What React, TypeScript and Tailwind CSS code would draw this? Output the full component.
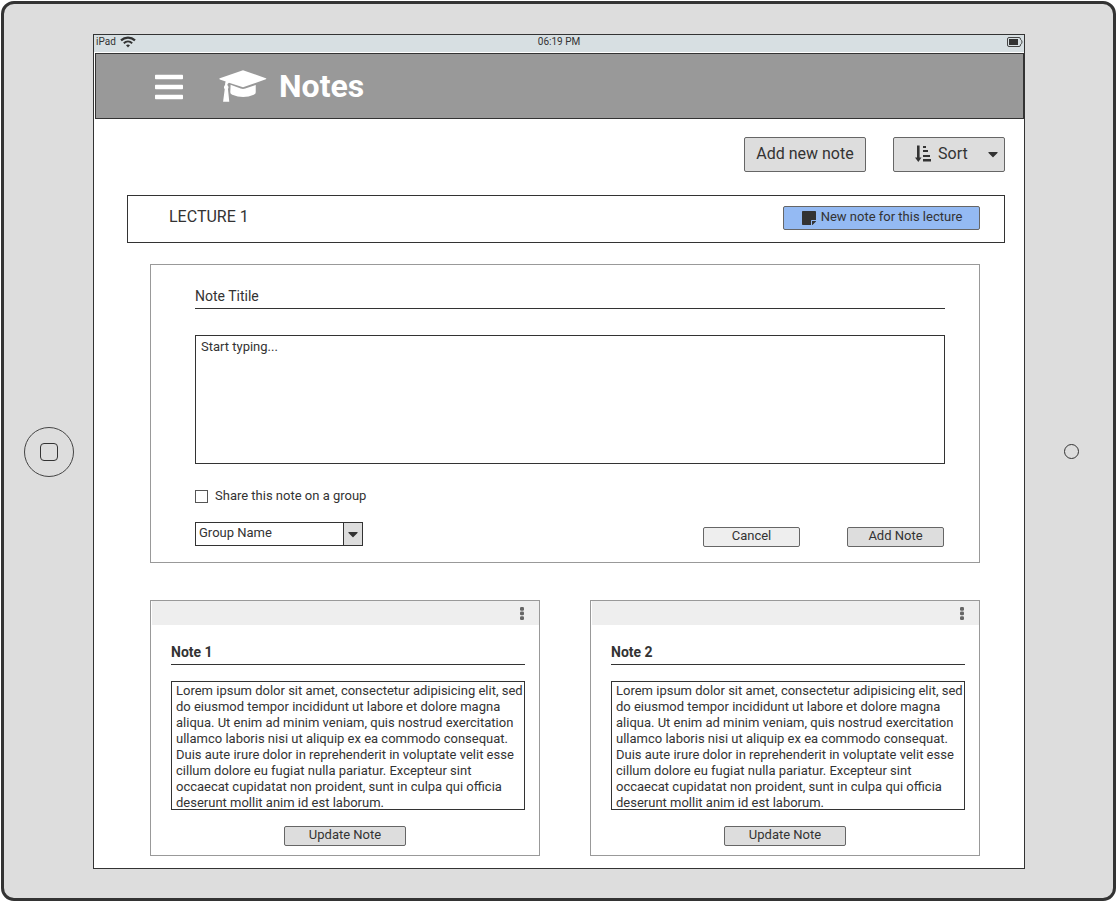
import { useState } from "react";
import { FaBars, FaCaretDown, FaStickyNote } from "react-icons/fa";

const lorem =
  "Lorem ipsum dolor sit amet, consectetur adipisicing elit, sed do eiusmod tempor incididunt ut labore et dolore magna aliqua. Ut enim ad minim veniam, quis nostrud exercitation ullamco laboris nisi ut aliquip ex ea commodo consequat. Duis aute irure dolor in reprehenderit in voluptate velit esse cillum dolore eu fugiat nulla pariatur. Excepteur sint occaecat cupidatat non proident, sunt in culpa qui officia deserunt mollit anim id est laborum.";

function WifiIcon() {
  return (
    <svg viewBox="0 0 16 12" className="h-3 w-4" fill="none" stroke="#333" aria-hidden="true">
      <path d="M1 4.4C5 0.6 11 0.6 15 4.4" strokeWidth="2.2" />
      <path d="M3.8 7.2C6.2 5 9.8 5 12.2 7.2" strokeWidth="1.9" />
      <path d="M6 9.2Q8 7.8 10 9.2L8 11.6Z" fill="#333" stroke="none" />
    </svg>
  );
}

function BatteryIcon() {
  return (
    <svg viewBox="0 0 16 10" className="h-[10px] w-4" aria-hidden="true">
      <path
        d="M2 0.5H12Q13.5 0.5 13.5 2V2.5Q15 3 15 5T13.5 7.5V8Q13.5 9.5 12 9.5H2Q0.5 9.5 0.5 8V2Q0.5 0.5 2 0.5Z"
        fill="#d7dfe2"
        stroke="#444"
      />
      <rect x="2" y="2" width="9" height="6" fill="#333" />
    </svg>
  );
}

function CapIcon() {
  return (
    <svg viewBox="0 0 146 98" className="ml-9 h-8 w-12" fill="currentColor" aria-hidden="true">
      <path d="M73 1L143 25Q146 27 143 28L73 53L30 39Q25 41 25 46Q31 52 27 58L31 97H12L17 59Q12 52 18 46Q18 39 20 35L2 29Q-1 27 2 25Z" />
      <path d="M35 45L66 57Q73 60 80 57L112 46V68Q112 73 106 76Q74 90 40 76Q34 73 34 68Z" />
    </svg>
  );
}

function SortIcon() {
  return (
    <svg viewBox="0 0 17 17" className="mr-1.5 size-[17px]" fill="currentColor" aria-hidden="true">
      <path d="M2 0.5H4.6V12.5H6.6L3.3 17L0 12.5H2Z" />
      <rect x="8" y="1" width="3" height="2" />
      <rect x="8" y="5" width="5" height="2" />
      <rect x="8" y="10" width="7" height="2" />
      <rect x="8" y="14" width="8" height="2.5" />
    </svg>
  );
}

function DotsIcon() {
  return (
    <svg viewBox="0 0 4 13" className="h-[13px] w-1" fill="currentColor" aria-hidden="true">
      <rect width="4" height="3.7" rx="1.2" />
      <rect y="4.6" width="4" height="3.7" rx="1.2" />
      <rect y="9.2" width="4" height="3.7" rx="1.2" />
    </svg>
  );
}

function StatusBar() {
  return (
    <div className="grid h-[17px] grid-cols-3 items-center bg-[#d7dfe2] pb-[3px] text-[10px] leading-3">
      <div className="flex items-center gap-1 pl-0.5">
        <span>iPad</span>
        <WifiIcon />
      </div>
      <span className="text-center">06:19 PM</span>
      <div className="flex justify-end pr-px">
        <BatteryIcon />
      </div>
    </div>
  );
}

function Header() {
  return (
    <header className="mt-px ml-px flex h-[66px] items-center border border-[#333] bg-[#999] pl-[59px] text-white">
      <button type="button" aria-label="Menu" className="pt-[2px]">
        <FaBars className="h-8 w-7" />
      </button>
      <CapIcon />
      <h1 className="ml-3 text-[32px] leading-9 font-bold">Notes</h1>
    </header>
  );
}

function NoteForm() {
  const [shared, setShared] = useState(false);
  return (
    <form
      className="mt-[21px] mr-[25px] ml-[23px] border border-[#999] pt-[19px] pr-[34px] pb-[15px] pl-11"
      onSubmit={(e) => e.preventDefault()}
    >
      <input
        aria-label="Note title"
        placeholder="Note Titile"
        className="block h-[25px] w-full border-b border-[#333] text-sm outline-none placeholder:text-[#333]"
      />
      <textarea
        aria-label="Note text"
        placeholder="Start typing..."
        className="mt-[26px] block h-[129px] w-full resize-none border border-[#333] px-[5px] py-[3px] text-[13px] leading-4 outline-none placeholder:text-[#333]"
      />
      <label className="mt-6 flex h-4 w-fit items-center gap-[7px] text-[13px] leading-4">
        <input
          type="checkbox"
          checked={shared}
          onChange={(e) => setShared(e.target.checked)}
          className="size-[13px] appearance-none border border-[#555] bg-white checked:bg-[#333]"
        />
        Share this note on a group
      </label>
      <div className="mt-[18px] flex h-[25px] items-end">
        <div className="relative mr-auto w-[168px] self-start">
          <select
            aria-label="Group"
            className="block h-6 w-full appearance-none border border-[#333] bg-white pb-[2px] pl-[3px] text-[13px] leading-4"
          >
            <option>Group Name</option>
          </select>
          <span className="pointer-events-none absolute inset-y-0 right-0 flex w-5 items-center justify-center border border-[#333] bg-[#ddd]">
            <FaCaretDown className="size-4" />
          </span>
        </div>
        <button
          type="button"
          className="mr-[47px] h-5 w-[97px] rounded-xs border border-[#666] bg-[#eee] pb-[2px] text-[13px] leading-4"
        >
          Cancel
        </button>
        <button
          type="submit"
          className="mr-px h-5 w-[97px] rounded-xs border border-[#666] bg-[#ddd] pb-[2px] text-[13px] leading-4"
        >
          Add Note
        </button>
      </div>
    </form>
  );
}

function NoteCard({ title }: { title: string }) {
  return (
    <article className="border border-[#999] pb-[9px]">
      <div className="ml-px flex h-6 items-center justify-end bg-[#eee] pr-[9px]">
        <button type="button" aria-label={`${title} options`} className="flex w-4 justify-center text-[#666]">
          <DotsIcon />
        </button>
      </div>
      <div className="pr-[14px] pl-5">
        <h2 className="mt-[15px] h-[25px] border-b border-[#333] text-sm leading-6 font-bold">{title}</h2>
        <textarea
          aria-label={`${title} text`}
          defaultValue={lorem}
          className="mt-4 block h-[129px] w-full resize-none overflow-hidden border border-[#333] pt-px pl-1 text-[13px] leading-4 outline-none"
        />
      </div>
      <button
        type="button"
        className="mx-auto mt-4 block h-5 w-[122px] rounded-xs border border-[#666] bg-[#ddd] pb-[2px] text-[13px] leading-4"
      >
        Update Note
      </button>
    </article>
  );
}

export default function App() {
  return (
    <div className="min-h-screen bg-white p-px font-['Roboto',sans-serif] text-[#333]">
      <div className="flex min-h-[calc(100vh-2px)] rounded-[13px] border-3 border-[#333] bg-[#ddd] pt-[30px] pb-[29px]">
        <div className="flex w-[89px] shrink-0 items-center justify-center">
          <button
            type="button"
            aria-label="Home"
            className="flex size-[50px] items-center justify-center rounded-full border border-[#444]"
          >
            <span className="size-[18px] rounded-[4px] border border-[#333]" />
          </button>
        </div>
        <div className="min-w-0 grow border border-[#333] bg-white">
          <StatusBar />
          <Header />
          <main className="pt-[18px] pr-[19px] pb-3 pl-[33px]">
            <div className="flex justify-end gap-[27px]">
              <button
                type="button"
                className="h-[35px] w-[122px] rounded-xs border border-[#666] bg-[#ddd] pb-[2px] text-base leading-5"
              >
                Add new note
              </button>
              <button
                type="button"
                className="flex h-[35px] w-[112px] items-center rounded-xs border border-[#666] bg-[#ddd] pr-[3px] pb-[2px] pl-[21px] text-base leading-5"
              >
                <SortIcon />
                Sort
                <FaCaretDown className="ml-auto size-4" />
              </button>
            </div>
            <section className="mt-[23px] flex h-12 items-center justify-between border border-[#333] pr-6 pb-[2px] pl-[41px]">
              <h2 className="pb-[2px] text-base leading-5">LECTURE 1</h2>
              <button
                type="button"
                className="flex h-6 w-[197px] items-center justify-center gap-1 rounded-xs border border-[#666] bg-[#94baf3] pb-[2px] text-[13px] leading-4"
              >
                <FaStickyNote className="mt-[2px] size-4" />
                New note for this lecture
              </button>
            </section>
            <NoteForm />
            <div className="mt-[37px] mr-[25px] ml-[23px] grid grid-cols-2 gap-[50px]">
              <NoteCard title="Note 1" />
              <NoteCard title="Note 2" />
            </div>
          </main>
        </div>
        <div className="flex w-[88px] shrink-0 items-center justify-center pl-1">
          <span className="size-[15px] rounded-full border border-[#333]" />
        </div>
      </div>
    </div>
  );
}
